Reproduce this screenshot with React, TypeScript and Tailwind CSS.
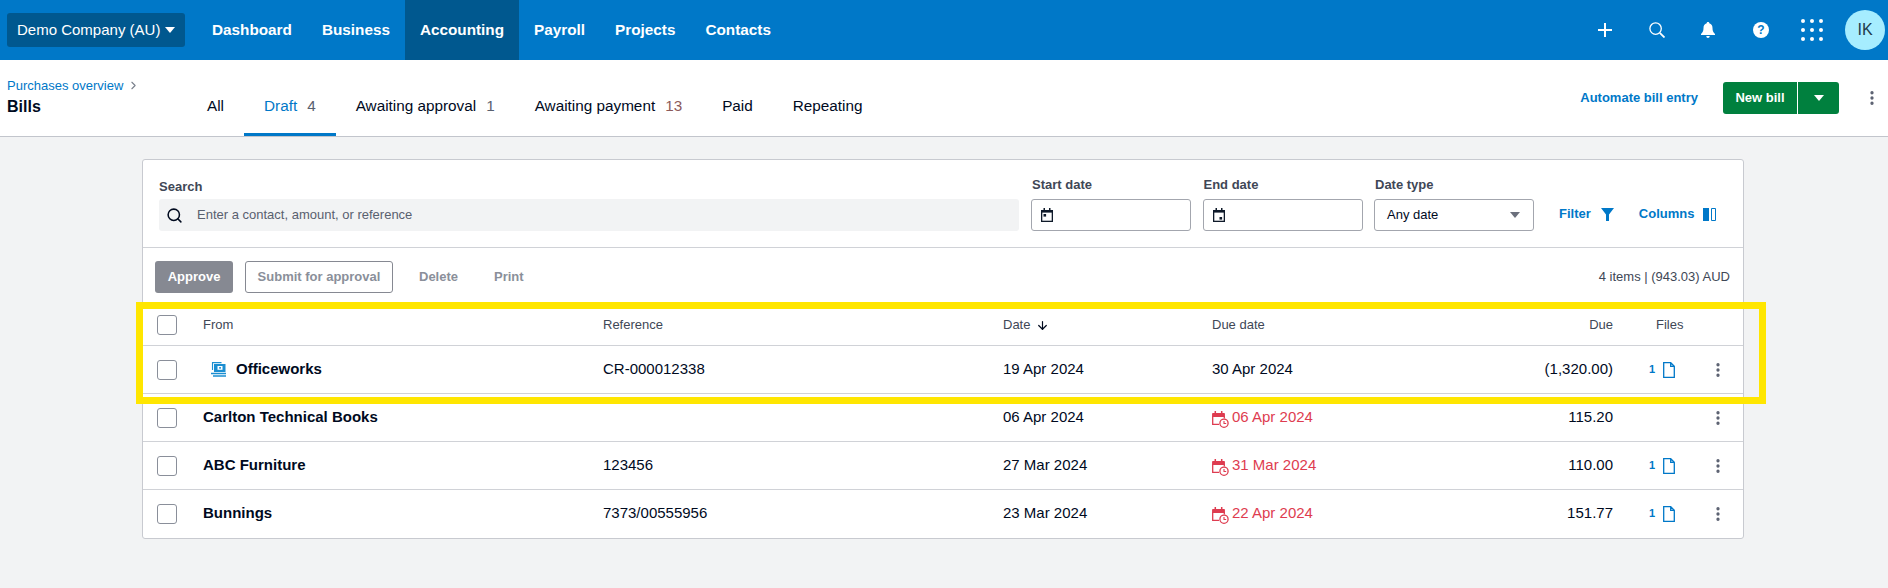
import { ChevronRight, Search, MoreVertical, ArrowDown } from "lucide-react";

const sans = "font-['Liberation_Sans',Arial,sans-serif]";

const navItems = ["Dashboard", "Business", "Accounting", "Payroll", "Projects", "Contacts"];

const tabs = [
  { label: "All", x: "pl-[22px] pr-[20px]" },
  { label: "Draft", count: "4", active: true, x: "px-[20px]" },
  { label: "Awaiting approval", count: "1", x: "px-[20px]" },
  { label: "Awaiting payment", count: "13", x: "px-[20px]", countColor: "text-[#8c5a5a]" },
  { label: "Paid", x: "px-[20px]" },
  { label: "Repeating", x: "px-[20px]" },
];

const bills = [
  { from: "Carlton Technical Books", reference: "", date: "06 Apr 2024", due: "06 Apr 2024", amount: "115.20", files: false },
  { from: "ABC Furniture", reference: "123456", date: "27 Mar 2024", due: "31 Mar 2024", amount: "110.00", files: true },
  { from: "Bunnings", reference: "7373/00555956", date: "23 Mar 2024", due: "22 Apr 2024", amount: "151.77", files: true },
];

const rowGrid = "grid grid-cols-[60px_400px_400px_209px_250px_151px_87px_1fr] items-center";

const Caret = ({ className }: { className: string }) => (
  <svg viewBox="0 0 10 6" className={className} fill="currentColor">
    <path d="M0 0h10L5 6z" />
  </svg>
);

const Checkbox = () => <div className="w-5 h-5 ml-[14px] rounded-[3px] border border-[#8a8f9a] bg-white" />;

const Kebab = ({ className = "text-[#5a6070]" }: { className?: string }) => (
  <MoreVertical className={`w-[18px] h-[18px] ${className}`} strokeWidth={2.4} />
);

const DocIcon = () => (
  <svg viewBox="0 0 12 16" className="w-[12px] h-[16px] text-[#0078c8]" fill="none" stroke="currentColor" strokeWidth="1.3">
    <path d="M.7.7h7l3.600 3.600v11H.7zM7.700.7v3.600h3.600" />
  </svg>
);

const CalendarIcon = ({ right }: { right?: boolean }) => (
  <svg viewBox="0 0 12 14" className="w-3 h-[14px] text-[#0f1a2a]" fill="none">
    <path d="M2.500 0h1.500v2H8V0h1.500v2H12v12H0V2h2.500z" fill="currentColor" />
    <rect x="1.300" y="4.600" width="9.400" height="8.100" fill="white" />
    <rect x={right ? 6.5 : 2.5} y={right ? 9 : 6} width="2.600" height="2.600" fill="currentColor" />
  </svg>
);

const OverdueIcon = () => (
  <svg viewBox="0 0 17 17" className="w-[17px] h-[17px] mt-[4px] text-[#de3c50] shrink-0" fill="none" stroke="currentColor">
    <path d="M.6 2.500h11.800v3H.6z" fill="currentColor" strokeWidth="1" />
    <path d="M3.300 0v2.500M9.700 0v2.500" strokeWidth="1.500" />
    <path d="M.7 5v8.300h6.300" strokeWidth="1.300" />
    <path d="M12.300 5v2.500" strokeWidth="1.300" />
    <circle cx="12" cy="12.200" r="4.100" fill="white" strokeWidth="1.300" />
    <path d="M12 10v2.500h2.200" strokeWidth="1.100" />
  </svg>
);

const ContactIcon = () => (
  <svg viewBox="0 0 15 15" className="w-[15px] h-[15px] text-[#1b8ed1]" fill="none">
    <path d="M1.500 8V.6h9" stroke="currentColor" strokeWidth="1.100" />
    <rect x="3" y="2" width="11.500" height="8" fill="currentColor" />
    <rect x="6.500" y="4" width="5" height="3.800" fill="white" />
    <rect x="8.200" y="5" width="1.700" height="1.700" fill="currentColor" />
    <path d="M0 11.500h15M2 14h13" stroke="currentColor" strokeWidth="1.300" />
  </svg>
);

const Files = () => (
  <div className="flex items-center gap-[8px] pl-[36px]">
    <span className="text-[11px] font-bold text-[#0078c8] leading-none">1</span>
    <DocIcon />
  </div>
);

const DateField = ({ label, right }: { label: string; right?: boolean }) => (
  <div className="w-[160px]">
    <div className="text-[13px] font-bold text-[#404756] mb-[7px] leading-[15px] ml-[1px]">{label}</div>
    <div className="h-[32px] rounded-[3px] border border-[#a3a6ae] flex items-center pl-[9px]">
      <CalendarIcon right={right} />
    </div>
  </div>
);

export default function App() {
  return (
    <div className={`relative w-[1888px] h-[588px] overflow-hidden bg-[#f2f3f4] ${sans}`}>
      {/* Top nav */}
      <div className="h-[60px] bg-[#0078c8] flex items-stretch text-white">
        <div className="ml-[7px] my-[13px] w-[178px] rounded-[3px] bg-[#00588f] flex items-center pl-[10px] gap-[5px] text-[15px]">
          Demo Company (AU)
          <Caret className="w-[10px] h-[6px]" />
        </div>
        <div className="ml-[12px] flex">
          {navItems.map((item) => (
            <div
              key={item}
              className={`px-[15px] flex items-center text-[15.3px] font-bold ${item === "Accounting" ? "bg-[#00588f]" : ""}`}
            >
              {item}
            </div>
          ))}
        </div>
        <div className="ml-auto flex items-center pr-[3px]">
          <svg viewBox="0 0 14 14" className="w-[14px] h-[14px] mr-[37px]" fill="white">
            <path d="M6 0h2v6h6v2H8v6H6V8H0V6h6z" />
          </svg>
          <svg viewBox="0 0 16 16" className="w-[16px] h-[16px] mr-[36px]" fill="none" stroke="white">
            <circle cx="6.600" cy="6.600" r="5.700" strokeWidth="1.300" />
            <path d="M10.800 10.800L15.500 15.500" strokeWidth="1.800" />
          </svg>
          <svg viewBox="0 0 14 16" className="w-[14px] h-[16px] mr-[38px]" fill="white">
            <path d="M7 0c.8 0 1.300.5 1.300 1.300 2.200.6 3.200 2.400 3.200 4.700 0 3 .8 4.300 2.500 6v1H0v-1c1.700-1.700 2.500-3 2.500-6 0-2.300 1-4.100 3.200-4.700C5.700.5 6.200 0 7 0zM5.300 14h3.400c0 1.200-.7 2-1.700 2s-1.700-.8-1.700-2z" />
          </svg>
          <div className="w-[16px] h-[16px] mr-[32px] rounded-full bg-white text-[#0078c8] text-[12px] font-bold flex items-center justify-center">
            ?
          </div>
          <div className="grid grid-cols-3 gap-[5px] mr-[22px]">
            {Array.from({ length: 9 }).map((_, i) => (
              <div key={i} className="w-[4px] h-[4px] rounded-full bg-white" />
            ))}
          </div>
          <div className="w-[40px] h-[40px] rounded-full bg-[#a6edff] text-[#1e3a4a] text-[16px] flex items-center justify-center">
            IK
          </div>
        </div>
      </div>

      {/* Page header */}
      <div className="h-[77px] bg-white border-b border-[#c2c5cc] flex">
        <div className="w-[185px] pl-[7px] pt-[18px]">
          <div className="flex items-center text-[13px] leading-[15px] text-[#0078c8]">
            Purchases overview
            <ChevronRight className="w-[13px] h-[13px] ml-[4px] text-[#7a808c]" />
          </div>
          <div className="mt-[4px] text-[16px] font-bold text-[#000a1e] leading-[19px]">Bills</div>
        </div>
        <div className="flex">
          {tabs.map((tab) => (
            <div
              key={tab.label}
              className={`${tab.x} flex items-center pt-[19px] text-[15.3px] h-[76px] border-b-[3px] ${
                tab.active ? "border-[#0078c8] text-[#0078c8]" : "border-transparent text-[#000a1e]"
              }`}
            >
              {tab.label}
              {tab.count && <span className={`ml-[10px] ${tab.countColor ?? "text-[#59606f]"}`}>{tab.count}</span>}
            </div>
          ))}
        </div>
        <div className="ml-auto flex items-center pr-[7px]">
          <span className="text-[13px] font-bold text-[#0078c8] mr-[25px]">Automate bill entry</span>
          <div className="flex h-[32px] w-[116px] rounded-[3px] bg-[#00803e] text-white mr-[24px]">
            <div className="w-[75px] border-r border-white text-[13px] font-bold flex items-center justify-center">New bill</div>
            <div className="flex-1 flex items-center justify-center">
              <Caret className="w-[10px] h-[6px]" />
            </div>
          </div>
          <Kebab />
        </div>
      </div>

      {/* Bills card */}
      <div className="mt-[22px] ml-[142px] w-[1602px] h-[380px] rounded-[3px] border border-[#c8cad0] bg-white">
        <div className="h-[88px] border-b border-[#d0d2d7] flex items-start pt-[22px] pl-[16px]">
          <div className="w-[860px]">
            <div className="text-[13px] font-bold text-[#404756] leading-[15px] -mt-[3px] mb-[5px]">Search</div>
            <div className="h-[32px] rounded-[3px] bg-[#f2f3f4] flex items-center pl-[7px]">
              <Search className="w-[17px] h-[17px] text-[#000a1e]" strokeWidth={2.2} />
              <span className="ml-[14px] text-[13px] text-[#59606f]">Enter a contact, amount, or reference</span>
            </div>
          </div>
          <div className="ml-[12px] -mt-[5px] flex gap-[11.5px]">
            <DateField label="Start date" />
            <DateField label="End date" right />
            <div className="w-[160px]">
              <div className="text-[13px] font-bold text-[#404756] mb-[7px] leading-[15px] ml-[1px]">Date type</div>
              <div className="h-[32px] rounded-[3px] border border-[#a3a6ae] flex items-center justify-between pl-[12px] pr-[13px] text-[13px] text-[#000a1e]">
                Any date
                <Caret className="w-[10px] h-[6px] text-[#6b707c]" />
              </div>
            </div>
          </div>
          <div className="ml-[25px] mt-[16px] flex items-center text-[13px] font-bold text-[#0078c8] h-[32px]">
            Filter
            <svg viewBox="0 0 13 13" className="w-[13px] h-[13px] ml-[10px]" fill="currentColor">
              <path d="M0 0h13L8 6.500V13H5V6.500z" />
            </svg>
            <span className="ml-[25px]">Columns</span>
            <svg viewBox="0 0 13 13" className="w-[13px] h-[13px] ml-[9px]" fill="none">
              <path d="M0 0h6v13H0z" fill="currentColor" />
              <path d="M8.500.500h4v12h-4z" stroke="currentColor" />
            </svg>
          </div>
        </div>

        {/* Actions */}
        <div className="h-[61px] flex items-center pl-[12px] pr-[13px] text-[13px] font-bold text-[#8a8f9a]">
          <div className="w-[78px] h-[32px] mt-[-4px] rounded-[3px] bg-[#868992] text-white flex items-center justify-center">Approve</div>
          <div className="ml-[12px] w-[148px] h-[32px] mt-[-4px] rounded-[3px] border border-[#868992] flex items-center justify-center">Submit for approval</div>
          <span className="ml-[26px] mt-[-4px]">Delete</span>
          <span className="ml-[36px] mt-[-4px]">Print</span>
          <span className="ml-auto mt-[-4px] font-normal text-[13px] text-[#404756]">4 items | (943.03) AUD</span>
        </div>

        {/* Table header */}
        <div className={`${rowGrid} h-[37px] border-b border-[#d0d2d7] text-[13px] text-[#404756] pb-[4px]`}>
          <Checkbox />
          <div>From</div>
          <div>Reference</div>
          <div className="flex items-center gap-[6px]">
            Date
            <ArrowDown className="w-[13px] h-[13px] text-[#000a1e]" strokeWidth={2.2} />
          </div>
          <div>Due date</div>
          <div className="text-right">Due</div>
          <div className="pl-[43px]">Files</div>
          <div></div>
        </div>

        {/* Credit note row */}
        <div className={`${rowGrid} h-[48px] border-b border-[#d0d2d7] text-[15px] text-[#000a1e]`}>
          <Checkbox />
          <div className="flex items-center pl-[8px] gap-[10px] font-bold">
            <ContactIcon />
            Officeworks
          </div>
          <div>CR-000012338</div>
          <div>19 Apr 2024</div>
          <div>30 Apr 2024</div>
          <div className="text-right">(1,320.00)</div>
          <Files />
          <div className="pl-[9px]">
            <Kebab />
          </div>
        </div>

        {bills.map((bill, idx) => (
          <div
            key={bill.from}
            className={`${rowGrid} h-[48px] border-b text-[15px] text-[#000a1e] ${idx < bills.length - 1 ? "border-[#d0d2d7]" : "border-transparent"}`}
          >
            <Checkbox />
            <div className="font-bold">{bill.from}</div>
            <div>{bill.reference}</div>
            <div>{bill.date}</div>
            <div className="flex items-center gap-[3px] text-[#de3c50]">
              <OverdueIcon />
              {bill.due}
            </div>
            <div className="text-right">{bill.amount}</div>
            {bill.files ? <Files /> : <div />}
            <div className="pl-[9px]">
              <Kebab />
            </div>
          </div>
        ))}
      </div>

      {/* Yellow highlight drawn over the screenshot */}
      <div className="absolute left-[136px] top-[302px] w-[1630px] h-[102px] border-[7px] border-[#ffe600] pointer-events-none" />
    </div>
  );
}
